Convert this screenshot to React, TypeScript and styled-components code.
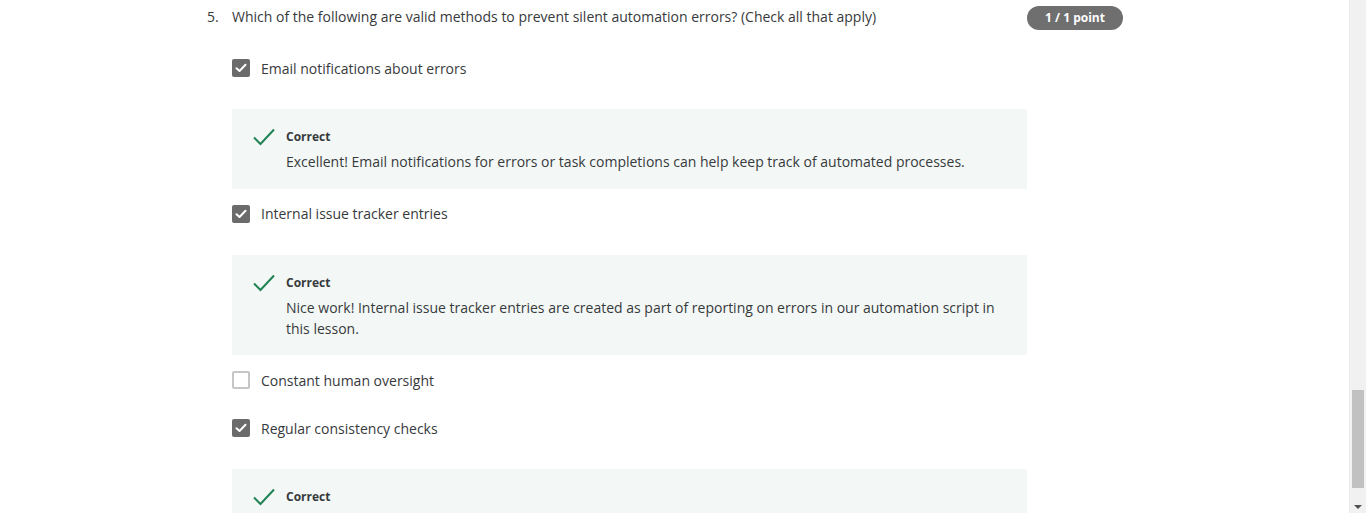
import React from "react";
import styled, { createGlobalStyle } from "styled-components";

const Global = createGlobalStyle`
  html, body { margin: 0; padding: 0; background: #fff; overflow: hidden; }
  body { font-family: "Open Sans", "Liberation Sans", sans-serif; color: #373a3c; }
  * { box-sizing: border-box; }
`;

const Page = styled.div`
  padding: 7px 0 0 207px;
  width: 1349px;
`;

const Column = styled.div`
  width: 916px;
`;

const QuestionRow = styled.div`
  display: flex;
  align-items: flex-start;
  font-size: 14px;
  line-height: 20px;
  color: #373a3c;
`;

const Num = styled.span`
  width: 25px;
  flex: none;
`;

const QText = styled.span`
  flex: 1;
`;

const Badge = styled.span`
  flex: none;
  width: 96px;
  height: 24px;
  margin-top: -1px;
  border-radius: 12px;
  background: #6f6f6f;
  color: #fff;
  font-size: 12px;
  font-weight: 700;
  display: flex;
  align-items: center;
  justify-content: center;
`;

const Options = styled.div`
  display: flex;
  flex-direction: column;
  padding-left: 25px;
  margin-top: 26px;
`;

const Option = styled.div<{ $feedback?: boolean }>`
  margin-bottom: ${(p) => (p.$feedback ? 13 : 24)}px;
`;

const Row = styled.label`
  display: flex;
  align-items: center;
  height: 24px;
  gap: 11px;
  font-size: 14px;
  color: #373a3c;
`;

const Box = styled.span<{ $checked?: boolean }>`
  width: 18px;
  height: 18px;
  flex: none;
  border-radius: 2px;
  display: flex;
  align-items: center;
  justify-content: center;
  background: ${(p) => (p.$checked ? "#6b6b6b" : "#fff")};
  border: ${(p) => (p.$checked ? "none" : "2px solid #c6c6c6")};
`;

const Feedback = styled.div`
  margin-top: 29px;
  width: 795px;
  background: #f3f8f6;
  padding: 19px 24px 16px 21px;
  display: flex;
  gap: 11px;
`;

const IconWrap = styled.span`
  flex: none;
  width: 22px;
  height: 18px;
  display: flex;
`;

const FbBody = styled.div`
  flex: 1;
`;

const FbTitle = styled.div`
  font-size: 12px;
  font-weight: 700;
  line-height: 18px;
  color: #373a3c;
`;

const FbText = styled.div`
  margin-top: 6.25px;
  font-size: 14px;
  line-height: 20.5px;
  color: #373a3c;
`;

const Scrollbar = styled.div`
  position: fixed;
  top: 0;
  right: 0;
  width: 17px;
  height: 513px;
  background: #f1f1f1;
  border-left: 1px solid #ededed;
`;

const Thumb = styled.div`
  position: absolute;
  left: 2px;
  width: 12px;
  top: 390px;
  height: 98px;
  background: #c1c1c1;
`;

const Arrow = styled.div`
  position: absolute;
  left: 4px;
  bottom: 4px;
  width: 0;
  height: 0;
  border-left: 4px solid transparent;
  border-right: 4px solid transparent;
  border-top: 4px solid #505050;
`;

const Tick = () => (
  <svg width="12" height="10" viewBox="0 0 12 10">
    <path d="M1.5 5.2 L4.5 8 L10.5 1.8" fill="none" stroke="#fff" strokeWidth="2" strokeLinecap="round" strokeLinejoin="round" />
  </svg>
);

const GreenCheck = () => (
  <svg width="22" height="18" viewBox="0 0 22 18">
    <path d="M1 9.5 L7.5 16 L21 1.5" fill="none" stroke="#1f8354" strokeWidth="2" />
  </svg>
);

type Item = { label: string; checked: boolean; feedback?: string };

const items: Item[] = [
  {
    label: "Email notifications about errors",
    checked: true,
    feedback:
      "Excellent! Email notifications for errors or task completions can help keep track of automated processes.",
  },
  {
    label: "Internal issue tracker entries",
    checked: true,
    feedback:
      "Nice work! Internal issue tracker entries are created as part of reporting on errors in our automation script in this lesson.",
  },
  { label: "Constant human oversight", checked: false },
  {
    label: "Regular consistency checks",
    checked: true,
    feedback:
      "Great job! Regular consistency checks help catch errors that would otherwise go unnoticed.",
  },
];

export default function App() {
  return (
    <>
      <Global />
      <Page>
        <Column>
          <QuestionRow>
            <Num>5.</Num>
            <QText>
              Which of the following are valid methods to prevent silent automation errors? (Check all that apply)
            </QText>
            <Badge>1 / 1 point</Badge>
          </QuestionRow>
          <Options>
            {items.map((it) => (
              <Option key={it.label} $feedback={!!it.feedback}>
                <Row>
                  <Box $checked={it.checked}>{it.checked && <Tick />}</Box>
                  {it.label}
                </Row>
                {it.feedback && (
                  <Feedback>
                    <IconWrap>
                      <GreenCheck />
                    </IconWrap>
                    <FbBody>
                      <FbTitle>Correct</FbTitle>
                      <FbText>{it.feedback}</FbText>
                    </FbBody>
                  </Feedback>
                )}
              </Option>
            ))}
          </Options>
        </Column>
      </Page>
      <Scrollbar>
        <Thumb />
        <Arrow />
      </Scrollbar>
    </>
  );
}
